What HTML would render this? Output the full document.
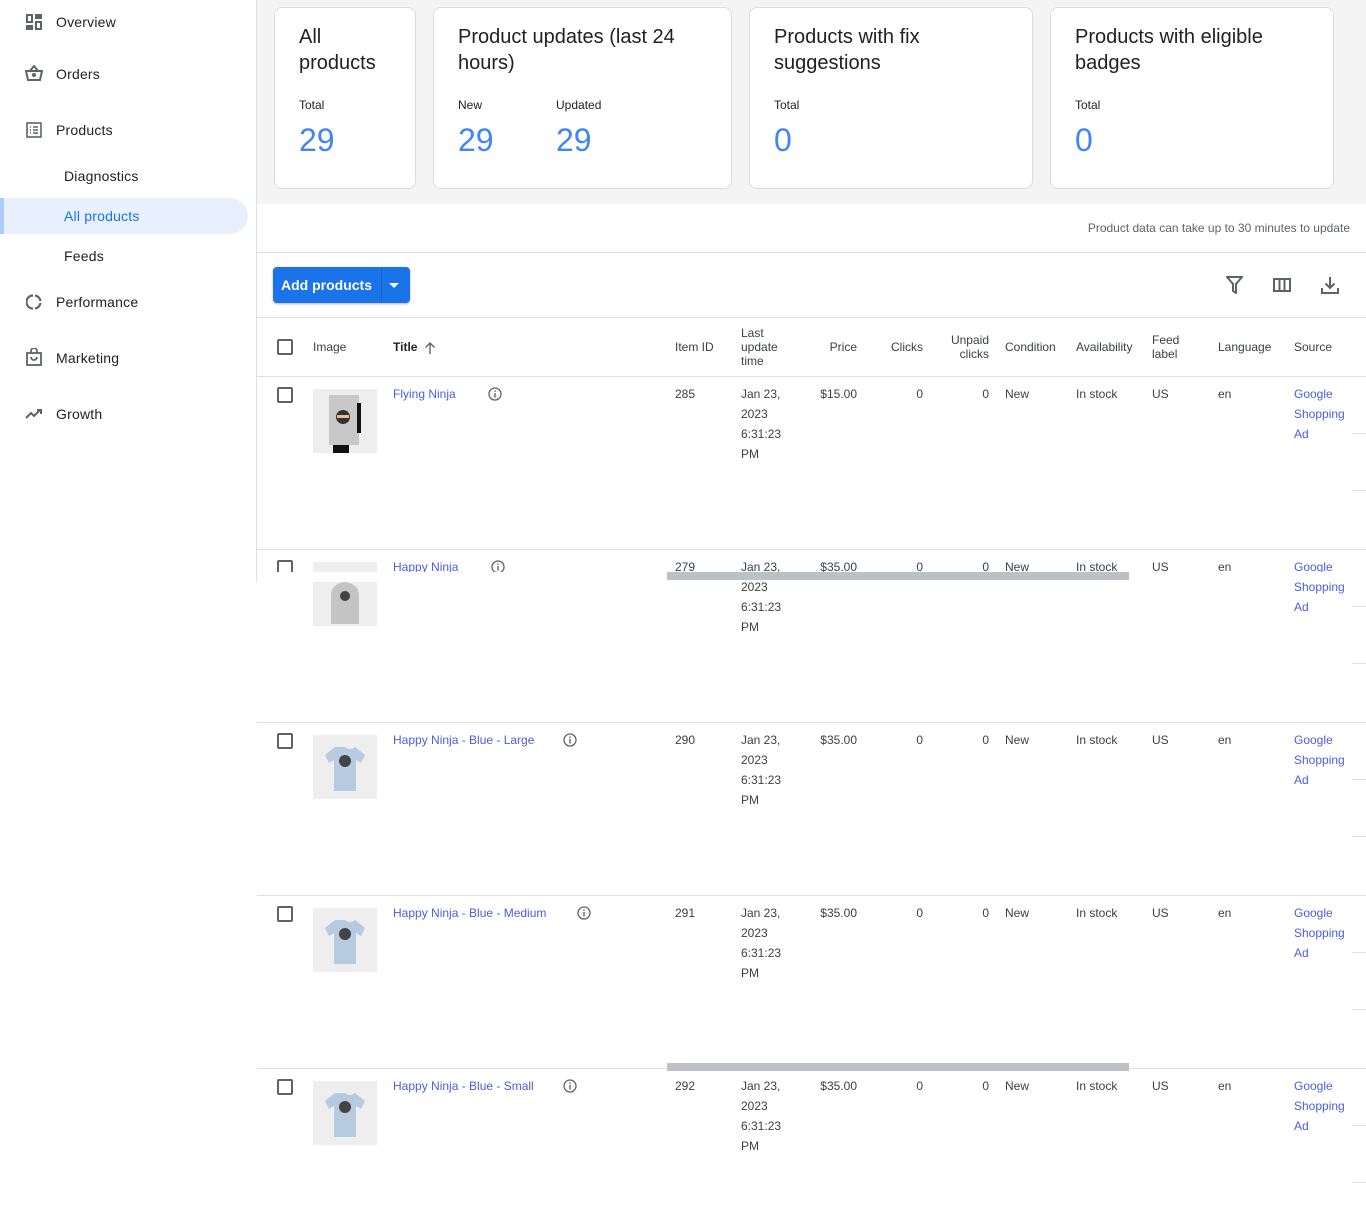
<!DOCTYPE html>
<html><head><meta charset="utf-8"><style>
*{margin:0;padding:0;box-sizing:border-box}
body{width:1366px;height:1216px;position:relative;background:#fff;font-family:"Liberation Sans",Arial,sans-serif;color:#3c4043;overflow:hidden}
.a{position:absolute;white-space:nowrap}
.nav{font-size:14px;color:#202124;letter-spacing:.2px}
.card{position:absolute;top:7px;height:182px;background:#fff;border:1px solid #dadce0;border-radius:8px}
.ct{position:absolute;left:24px;top:16px;font-size:20px;line-height:26px;color:#202124}
.cl{position:absolute;top:90px;font-size:12px;color:#202124}
.cn{position:absolute;top:114px;font-size:32px;color:#4285f4}
.hd{font-size:12px;color:#3c4043;line-height:14px}
.cb{position:absolute;width:16px;height:16px;border:2px solid #5f6368;border-radius:2px}
.c{font-size:12px;line-height:20px;color:#3c4043}
.lk{color:#4a5ee0}
.r{text-align:right}
.hr{position:absolute;left:257px;width:1109px;height:1px;background:#e0e0e0}
.th{position:absolute;left:313px;width:64px;height:64px;background:#eee}
</style></head><body>
<!-- sidebar -->
<div class="a" style="left:256px;top:0;width:1px;height:582px;background:#e0e0e0"></div>
<svg class="a" style="left:26px;top:14px" width="16" height="16" viewBox="0 0 16 16" fill="#5f6368"><rect x="0" y="0" width="7" height="9"/><rect x="9" y="0" width="7" height="5"/><rect x="9" y="7" width="7" height="9"/><rect x="0" y="11" width="7" height="5"/><rect x="2" y="2" width="3" height="5" fill="#fff"/><rect x="11" y="9" width="3" height="5" fill="#fff"/></svg>
<div class="a nav" style="left:56px;top:14px">Overview</div>
<svg class="a" style="left:25px;top:65px" width="18" height="16" viewBox="0 0 18 16" fill="none" stroke="#5f6368" stroke-width="2"><path d="M1 6h16l-2 9H3z M5 6l4-5 4 5"/><circle cx="9" cy="10" r="1" fill="#5f6368"/></svg>
<div class="a nav" style="left:56px;top:66px">Orders</div>
<svg class="a" style="left:26px;top:122px" width="16" height="16" viewBox="0 0 16 16" fill="none" stroke="#5f6368" stroke-width="1.6"><rect x="1" y="1" width="14" height="14"/><path d="M4 5h1M7 5h5M4 8h1M7 8h5M4 11h1M7 11h5"/></svg>
<div class="a nav" style="left:56px;top:122px">Products</div>
<div class="a nav" style="left:64px;top:168px">Diagnostics</div>
<div class="a" style="left:0;top:198px;width:248px;height:36px;background:#e8f0fe;border-radius:0 18px 18px 0;border-left:4px solid #aecbfa"></div>
<div class="a nav" style="left:64px;top:208px;color:#1a73e8">All products</div>
<div class="a nav" style="left:64px;top:248px">Feeds</div>
<svg class="a" style="left:26px;top:294px" width="16" height="16" viewBox="0 0 16 16" fill="none" stroke="#5f6368" stroke-width="2.2"><path d="M9 1.5A6.5 6.5 0 0 1 14.5 7M14.5 9A6.5 6.5 0 0 1 9 14.5M7 14.5A6.5 6.5 0 0 1 7 1.5"/></svg>
<div class="a nav" style="left:56px;top:294px">Performance</div>
<svg class="a" style="left:26px;top:348px" width="16" height="18" viewBox="0 0 16 18" fill="none" stroke="#5f6368" stroke-width="1.8"><rect x="1" y="5" width="14" height="12"/><path d="M5 5V3a3 3 0 0 1 6 0v2M5 9a3 3 0 0 0 6 0"/></svg>
<div class="a nav" style="left:56px;top:350px">Marketing</div>
<svg class="a" style="left:25px;top:408px" width="18" height="12" viewBox="0 0 18 12" fill="none" stroke="#5f6368" stroke-width="2"><path d="M1 10l5-5 3 3 6-6M12 2h4v4"/></svg>
<div class="a nav" style="left:56px;top:406px">Growth</div>

<!-- top area -->
<div class="a" style="left:257px;top:0;width:1109px;height:204px;background:#f4f4f4"></div>
<div class="card" style="left:274px;width:142px"><div class="ct">All<br>products</div><div class="cl" style="left:24px">Total</div><div class="cn" style="left:24px">29</div></div>
<div class="card" style="left:433px;width:299px"><div class="ct">Product updates (last 24<br>hours)</div><div class="cl" style="left:24px">New</div><div class="cl" style="left:122px">Updated</div><div class="cn" style="left:24px">29</div><div class="cn" style="left:122px">29</div></div>
<div class="card" style="left:749px;width:284px"><div class="ct">Products with fix<br>suggestions</div><div class="cl" style="left:24px">Total</div><div class="cn" style="left:24px">0</div></div>
<div class="card" style="left:1050px;width:284px"><div class="ct">Products with eligible<br>badges</div><div class="cl" style="left:24px">Total</div><div class="cn" style="left:24px">0</div></div>
<div class="a" style="right:16px;top:221px;font-size:12px;color:#5f6368">Product data can take up to 30 minutes to update</div>
<div class="hr" style="top:252px"></div>

<div class="a" style="left:273px;top:267px;width:137px;height:36px;background:#1a73e8;border-radius:4px;box-shadow:0 1px 2px rgba(0,0,0,.3)"></div>
<div class="a" style="left:381px;top:267px;width:1px;height:36px;background:#1765cc"></div>
<div class="a" style="left:281px;top:277px;font-size:14px;font-weight:bold;color:#fff">Add products</div>
<div class="a" style="left:389px;top:283px;width:0;height:0;border-left:5px solid transparent;border-right:5px solid transparent;border-top:5px solid #fff"></div>
<svg class="a" style="left:1226px;top:276px" width="17" height="18" viewBox="0 0 17 18" fill="none" stroke="#5f6368" stroke-width="2"><path d="M1 1h15l-6 7v9l-3-2V8z"/></svg>
<svg class="a" style="left:1273px;top:278px" width="18" height="14" viewBox="0 0 18 14" fill="none" stroke="#5f6368" stroke-width="2"><rect x="1" y="1" width="16" height="12"/><path d="M6.5 1v12M11.5 1v12"/></svg>
<svg class="a" style="left:1321px;top:276px" width="18" height="18" viewBox="0 0 18 18" fill="none" stroke="#5f6368" stroke-width="2"><path d="M9 1v11M4.5 7.5 9 12l4.5-4.5M1 12v5h16v-5"/></svg>
<div class="hr" style="top:317px"></div>

<!-- header -->
<div class="cb" style="left:277px;top:339px"></div>
<div class="a hd" style="left:313px;top:340px">Image</div>
<div class="a hd" style="left:393px;top:340px;font-weight:bold;color:#202124">Title</div>
<svg class="a" style="left:424px;top:341px" width="12" height="13" viewBox="0 0 12 13" fill="none" stroke="#5f6368" stroke-width="1.4"><path d="M6 13V2M1.5 6.5 6 2l4.5 4.5"/></svg>
<div class="a hd" style="left:675px;top:340px">Item ID</div>
<div class="a hd" style="left:741px;top:326px">Last<br>update<br>time</div>
<div class="a hd r" style="left:800px;width:57px;top:340px">Price</div>
<div class="a hd r" style="left:870px;width:53px;top:340px">Clicks</div>
<div class="a hd r" style="left:930px;width:59px;top:333px">Unpaid<br>clicks</div>
<div class="a hd" style="left:1005px;top:340px">Condition</div>
<div class="a hd" style="left:1076px;top:340px">Availability</div>
<div class="a hd" style="left:1152px;top:333px">Feed<br>label</div>
<div class="a hd" style="left:1218px;top:340px">Language</div>
<div class="a hd" style="left:1294px;top:340px">Source</div>
<div class="hr" style="top:376px"></div>

<!-- rows -->
<div id="rows"></div>
<script>
var rows=[["Flying Ninja",495,"285","$15.00",0],["Happy Ninja",498,"279","$35.00",1],["Happy Ninja - Blue - Large",570,"290","$35.00",2],["Happy Ninja - Blue - Medium",584,"291","$35.00",2],["Happy Ninja - Blue - Small",570,"292","$35.00",2]];
var h="";
rows.forEach(function(r,i){var t=376+i*173;
h+='<div class="cb" style="left:277px;top:'+(t+11)+'px"></div>';
var img;
if(r[4]==0)img='<svg width="64" height="64"><rect width="64" height="64" fill="#eee"/><rect x="16" y="6" width="30" height="50" fill="#c8c8c8"/><circle cx="30" cy="28" r="7" fill="#333"/><path d="M24 26h12v3H24z" fill="#e8c090"/><path d="M44 14h4v30h-4zM20 56h16v8H20z" fill="#111"/></svg>';
else if(r[4]==1)img='<svg width="64" height="64"><rect width="64" height="64" fill="#eee"/><path d="M18 62V34q0-12 14-14 14 2 14 14v28z" fill="#c4c4c4"/><circle cx="32" cy="34" r="5" fill="#444"/></svg>';
else img='<svg width="64" height="64"><rect width="64" height="64" fill="#eee"/><path d="M22 12l-10 8 4 8 5-3v31h22V25l5 3 4-8-10-8q-5 4-10 0z" fill="#b6cbe0"/><circle cx="32" cy="26" r="6" fill="#444"/></svg>';
h+='<div class="th" style="top:'+(t+13)+'px">'+img+'</div>';
h+='<div class="a c lk" style="left:393px;top:'+(t+8)+'px">'+r[0]+'</div>';
h+='<svg class="a" style="left:'+(r[1]-7)+'px;top:'+(t+11)+'px" width="14" height="14" viewBox="0 0 14 14"><circle cx="7" cy="7" r="6" fill="none" stroke="#5f6368" stroke-width="1.3"/><rect x="6.3" y="6" width="1.4" height="4.5" fill="#5f6368"/><rect x="6.3" y="3.5" width="1.4" height="1.4" fill="#5f6368"/></svg>';
h+='<div class="a c" style="left:675px;top:'+(t+8)+'px">'+r[2]+'</div>';
h+='<div class="a c" style="left:741px;top:'+(t+8)+'px">Jan 23,<br>2023<br>6:31:23<br>PM</div>';
h+='<div class="a c r" style="left:800px;width:57px;top:'+(t+8)+'px">'+r[3]+'</div>';
h+='<div class="a c r" style="left:870px;width:53px;top:'+(t+8)+'px">0</div>';
h+='<div class="a c r" style="left:930px;width:59px;top:'+(t+8)+'px">0</div>';
h+='<div class="a c" style="left:1005px;top:'+(t+8)+'px">New</div>';
h+='<div class="a c" style="left:1076px;top:'+(t+8)+'px">In stock</div>';
h+='<div class="a c" style="left:1152px;top:'+(t+8)+'px">US</div>';
h+='<div class="a c" style="left:1218px;top:'+(t+8)+'px">en</div>';
h+='<div class="a c lk" style="left:1294px;top:'+(t+8)+'px">Google<br>Shopping<br>Ad</div>';
h+='<div class="a" style="left:1352px;width:14px;height:1px;background:#e0e0e0;top:'+(t+57)+'px"></div>';
h+='<div class="a" style="left:1352px;width:14px;height:1px;background:#e0e0e0;top:'+(t+114)+'px"></div>';
if(i<4)h+='<div class="hr" style="top:'+(t+173)+'px"></div>';
});
h+='<div class="a" style="left:257px;top:572px;width:1109px;height:10px;background:#fff"></div>';
h+='<div class="a" style="left:667px;top:572px;width:462px;height:8px;background:#bdc1c6"></div>';
h+='<div class="a" style="left:667px;top:1063px;width:462px;height:8px;background:#bdc1c6"></div>';
document.getElementById("rows").innerHTML=h;
</script>
</body></html>
